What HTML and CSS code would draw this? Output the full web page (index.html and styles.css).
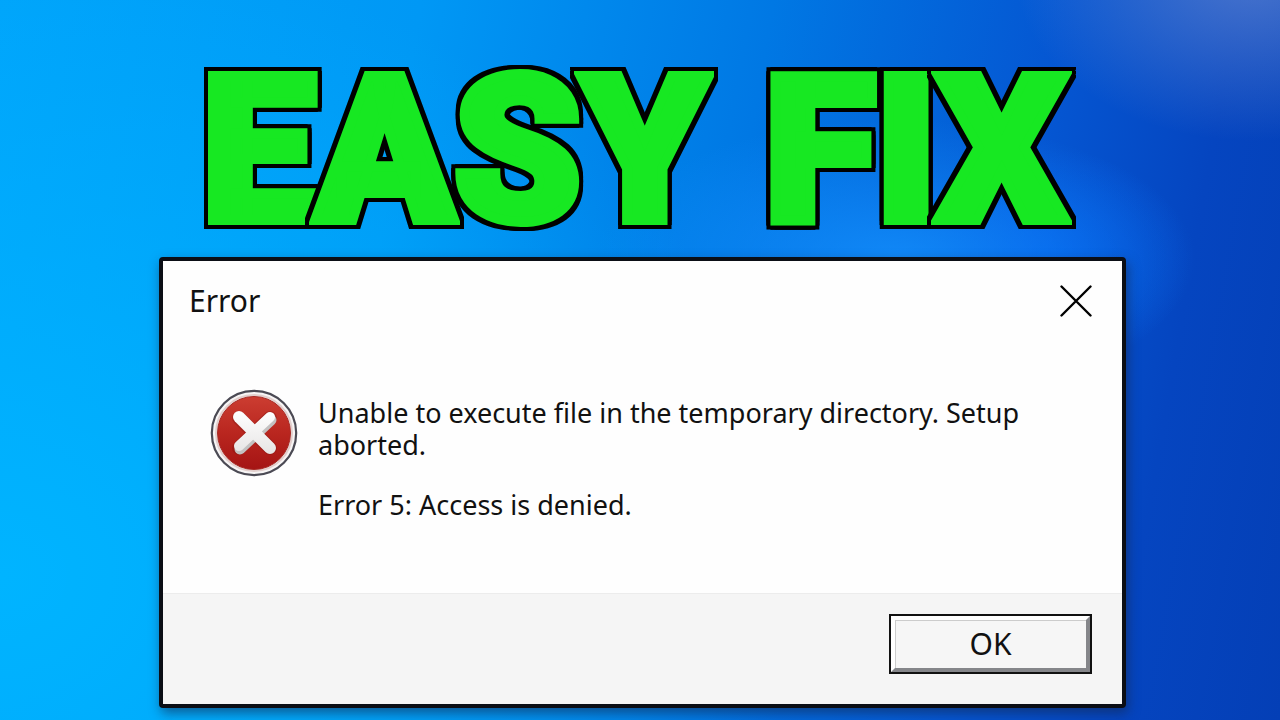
FILE: index.html
```html
<!DOCTYPE html>
<html lang="en">

<head>
    <meta charset="UTF-8">
    <meta name="viewport" content="width=device-width, initial-scale=1.0">
    <title>Easy Fix</title>
    <link rel="stylesheet" href="styles.css">
</head>

<body>
    <main class="page">
        <h1 class="headline">
            <span class="word"><span>E</span><span>A</span><span>S</span><span>Y</span></span>
            <span class="word"><span>F</span><span>I</span><span>X</span></span>
        </h1>

        <section class="dialog" role="dialog" aria-labelledby="dialogTitle">
            <header class="dialog-header">
                <h2 id="dialogTitle">Error</h2>
                <button type="button" class="btn-close" aria-label="Close">
                    <svg viewBox="0 0 32 32" width="32" height="32">
                        <path d="M1.5 1.5 L30.5 30.5 M30.5 1.5 L1.5 30.5" fill="none" stroke="#000" stroke-width="2.4" stroke-linecap="round" />
                    </svg>
                </button>
            </header>

            <div class="dialog-content">
                <svg class="error-icon" viewBox="0 0 88 88" width="88" height="88" aria-hidden="true">
                    <defs>
                        <linearGradient id="red" x1="0" y1="0" x2="0" y2="1">
                            <stop offset="0" stop-color="#cc3d31" />
                            <stop offset="0.5" stop-color="#b9261f" />
                            <stop offset="1" stop-color="#a51414" />
                        </linearGradient>
                        <linearGradient id="cross" gradientUnits="userSpaceOnUse" x1="0" y1="22" x2="0" y2="66">
                            <stop offset="0" stop-color="#ffffff" />
                            <stop offset="1" stop-color="#e6e4e4" />
                        </linearGradient>
                    </defs>
                    <circle cx="44" cy="44" r="42.2" fill="#f7f5f5" stroke="#4b4a54" stroke-width="2.2" />
                    <circle cx="44" cy="44" r="38" fill="none" stroke="#e2cfcd" stroke-width="2" />
                    <circle cx="44" cy="44" r="36.5" fill="url(#red)" stroke="#a82a25" stroke-width="1" />
                    <path d="M29 29 L60 59 M60 29 L29 59" fill="none" stroke="#7d1411" stroke-opacity="0.35" stroke-width="14" stroke-linecap="round" />
                    <path d="M61 31 L30 60" fill="none" stroke="#c3c1c1" stroke-width="11" stroke-linecap="round" />
                    <path d="M29 28 L60 59" fill="none" stroke="url(#cross)" stroke-width="12" stroke-linecap="round" />
                    <path d="M60 28 L29 57" fill="none" stroke="url(#cross)" stroke-width="10" stroke-linecap="round" />
                </svg>
                <div class="message">
                    <p>Unable to execute file in the temporary directory. Setup aborted.</p>
                    <p>Error 5: Access is denied.</p>
                </div>
            </div>

            <footer class="dialog-footer">
                <button type="button" class="btn-ok">OK</button>
            </footer>
        </section>
    </main>
</body>

</html>
```

FILE: styles.css
```css
* {
    margin: 0;
    padding: 0;
    box-sizing: border-box;
}

/* Wallpaper */
body {
    min-height: 100vh;
    font-family: 'Noto Sans', 'Open Sans', sans-serif;
    color: #111;
    background:
        radial-gradient(ellipse 240px 170px at 98% -4%, rgba(120, 150, 215, 0.6), rgba(60, 100, 200, 0)),
        radial-gradient(ellipse 300px 140px at 70% 36%, rgba(20, 145, 255, 0.8), rgba(20, 145, 255, 0)),
        radial-gradient(ellipse 140px 110px at 82% 36%, rgba(0, 95, 245, 0.6), rgba(0, 90, 240, 0)),
        radial-gradient(ellipse 800px 640px at 0% 80%, #00b4ff, rgba(0, 176, 255, 0)),
        linear-gradient(100deg, #00a4fb 0%, #0098f5 30%, #0078e4 55%, #0556d2 76%, #0545c0 88%, #043fb6 100%);
}

.page {
    display: flex;
    flex-direction: column;
    padding: 36px 154px 12px 159px;
}

/* Headline */
.headline {
    display: flex;
    gap: 56px;
    height: 221px;
    padding-left: 43px;
    font-family: Roboto, sans-serif;
    font-size: 203px;
    font-weight: 900;
    line-height: 230px;
    color: #17e822;
    white-space: nowrap;
}

.word {
    display: flex;
}

/* Green stroke makes the letters fatter, the shadows draw the black outline */
.word span {
    -webkit-text-stroke: 10px #17e822;
    filter: drop-shadow(4px 0 0 #000) drop-shadow(-4px 0 0 #000) drop-shadow(0 4px 0 #000) drop-shadow(0 -4px 0 #000);
}

/* Dialog */
.dialog {
    background-color: #fefefe;
    border: 4px solid #0b0e15;
    border-radius: 4px;
    box-shadow: 2px 5px 12px rgba(20, 40, 80, 0.6);
}

.dialog-header {
    display: flex;
    justify-content: space-between;
    align-items: center;
    height: 80px;
    padding: 0 30px 0 26px;
}

.dialog-header h2 {
    font-size: 30px;
    font-weight: 400;
    line-height: 36px;
}

.btn-close {
    display: flex;
    background: none;
    border: none;
    cursor: pointer;
}

.dialog-content {
    display: flex;
    gap: 20px;
    min-height: 252px;
    padding: 48px 48px 0 47px;
}

.error-icon {
    flex-shrink: 0;
}

.message {
    padding-top: 8px;
    font-size: 27px;
    line-height: 32px;
}

.message p + p {
    margin-top: 28px;
}

.dialog-footer {
    display: flex;
    justify-content: flex-end;
    padding: 22px 32px 32px;
    background-color: #f5f5f5;
    border-top: 1px solid #ececec;
}

/* OK button */
.btn-ok {
    width: 199px;
    height: 56px;
    background-color: #f6f6f6;
    border: 4px solid;
    border-color: #fff #85868a #85868a #fff;
    box-shadow: 0 0 0 2px #111, inset 1px 1px 0 #ccc;
    color: #111;
    font-family: inherit;
    font-size: 30px;
    line-height: 40px;
    cursor: pointer;
}

.btn-ok:active {
    border-color: #85868a #fff #fff #85868a;
}
```
